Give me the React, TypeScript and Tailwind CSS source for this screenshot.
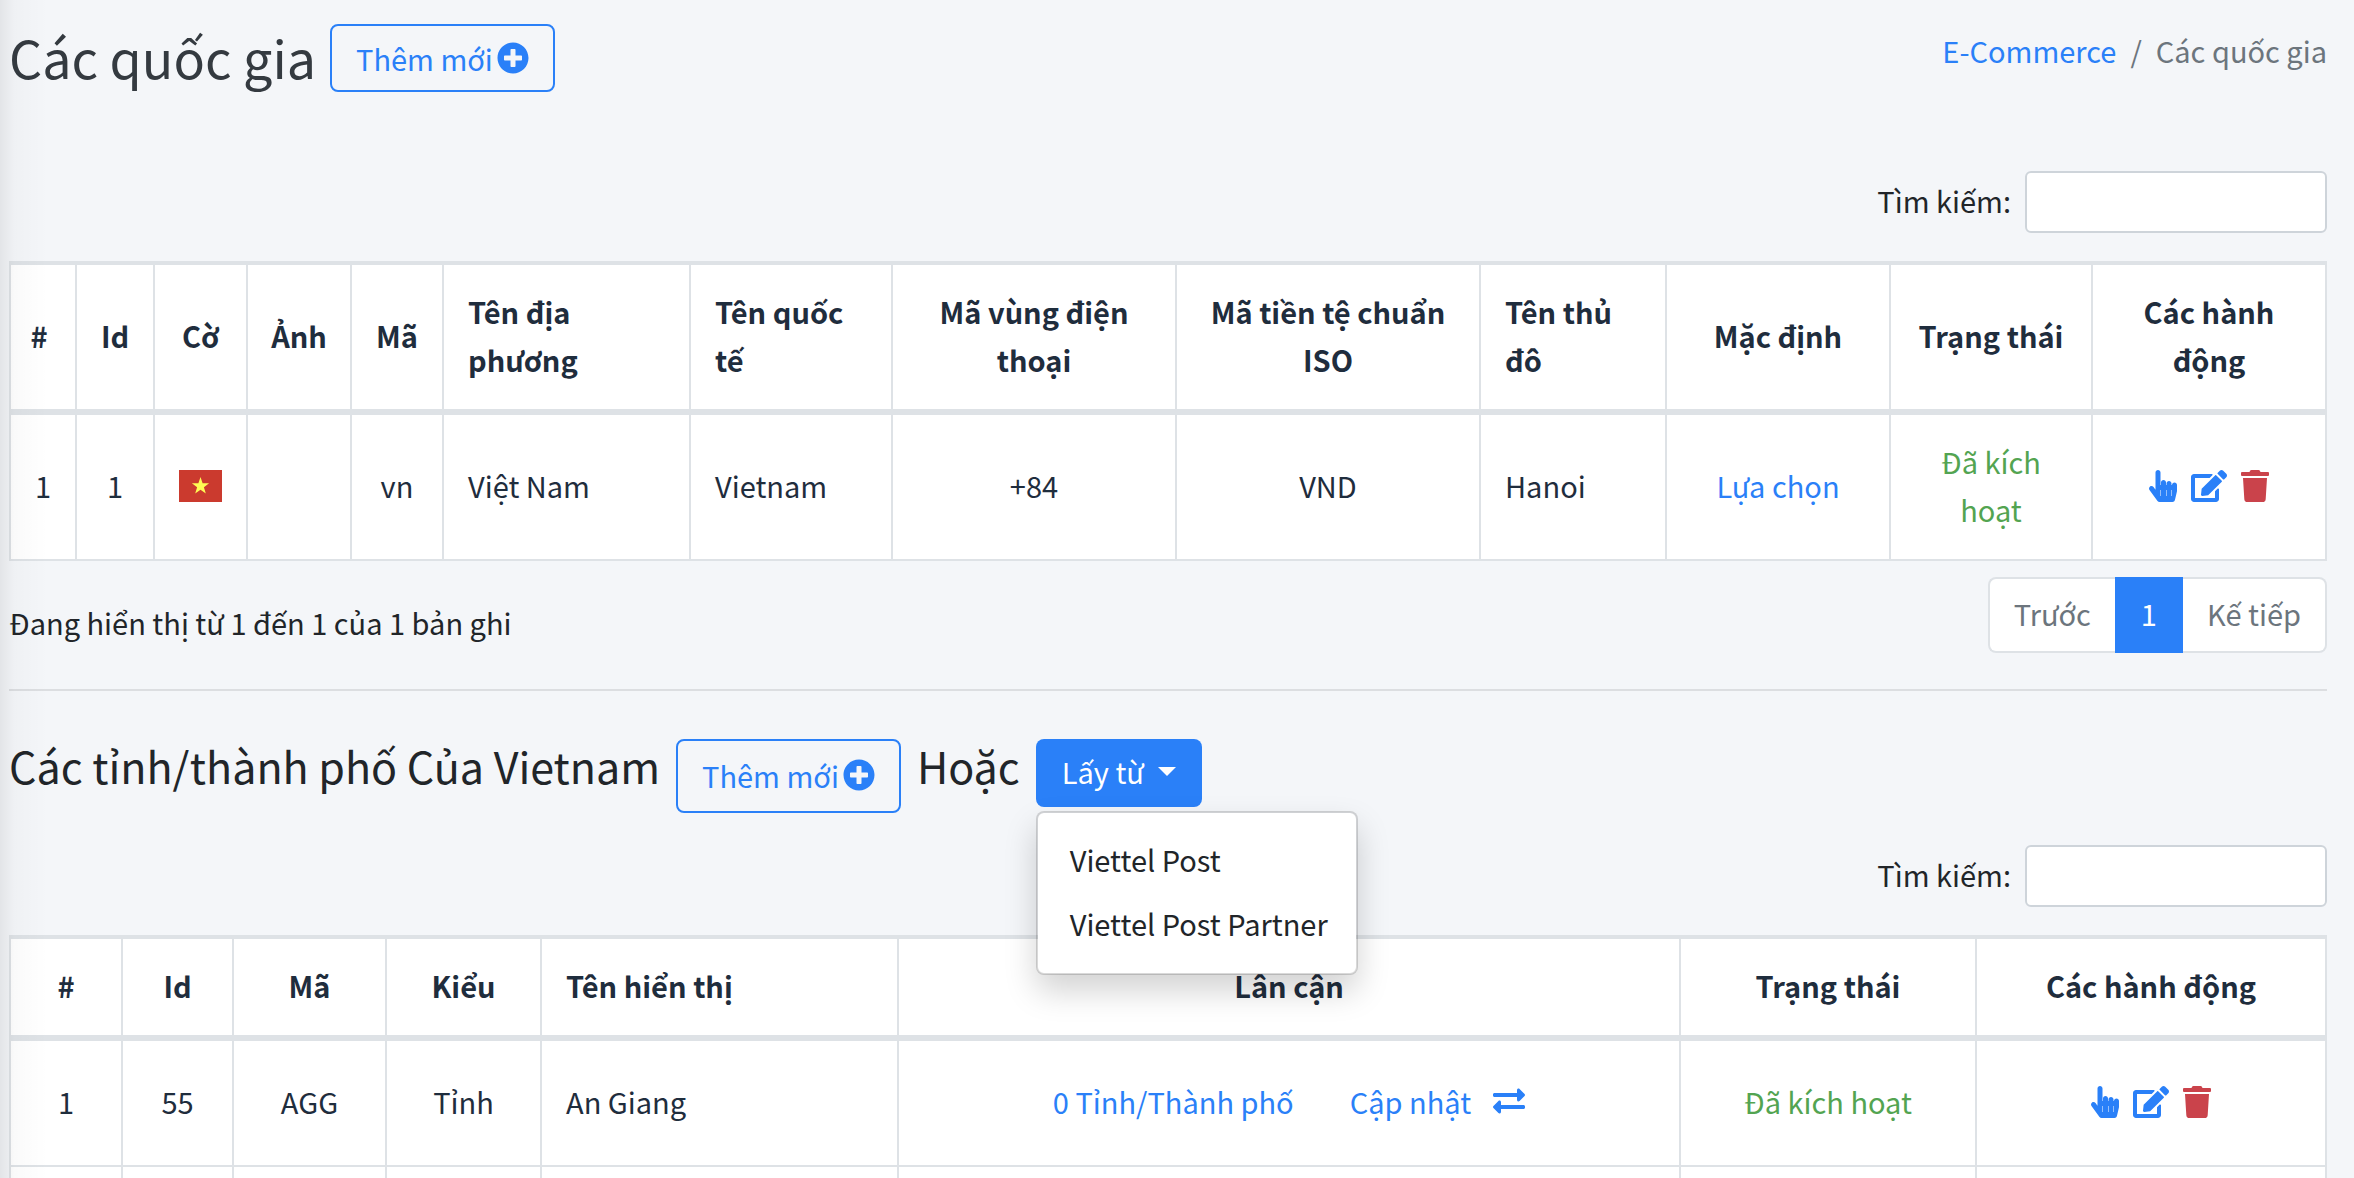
import { FaEdit, FaExchangeAlt, FaHandPointer, FaPlusCircle, FaTrash } from "react-icons/fa";

const countryColumns = [
    { title: "#", width: "w-[66px]", align: "pr-2 text-center" },
    { title: "Id", width: "w-[78px]", align: "text-center" },
    { title: "Cờ", width: "w-[93px]", align: "text-center" },
    { title: "Ảnh", width: "w-[104px]", align: "text-center" },
    { title: "Mã", width: "w-[92px]", align: "text-center" },
    { title: "Tên địa phương", width: "w-[247px]", align: "px-6 text-left" },
    { title: "Tên quốc tế", width: "w-[202px]", align: "px-6 text-left" },
    { title: "Mã vùng điện thoại", width: "w-[284px]", align: "px-6 text-center" },
    { title: "Mã tiền tệ chuẩn ISO", width: "w-[304px]", align: "px-6 text-center" },
    { title: "Tên thủ đô", width: "w-[186px]", align: "px-6 text-left" },
    { title: "Mặc định", width: "w-[224px]", align: "px-6 text-center" },
    { title: "Trạng thái", width: "w-[202px]", align: "px-6 text-center" },
    { title: "Các hành động", width: "w-[232px]", align: "px-6 text-center" },
]

const provinceColumns = [
    { title: "#", width: "w-[112px]", align: "text-center" },
    { title: "Id", width: "w-[111px]", align: "text-center" },
    { title: "Mã", width: "w-[153px]", align: "text-center" },
    { title: "Kiểu", width: "w-[155px]", align: "text-center" },
    { title: "Tên hiển thị", width: "w-[357px]", align: "px-6 text-left" },
    { title: "Lân cận", width: "w-[782px]", align: "text-center" },
    { title: "Trạng thái", width: "w-[296px]", align: "text-center" },
    { title: "Các hành động", width: "w-[348px]", align: "text-center" },
]

function AddButton({ className }: any) {
    return (
        <button type="button" className={`flex items-center gap-1 rounded-lg border-2 border-[#2a80f8] px-6 text-[29px] leading-[48px] text-[#2a80f8] ${className}`}>
            Thêm mới <FaPlusCircle className="size-8" />
        </button>
    )
}

function Search({ id }: any) {
    return (
        <div className="flex items-center justify-end gap-[14px]">
            <label htmlFor={id} className="pb-1">Tìm kiếm:</label>
            <input id={id} type="search" className="h-[62px] w-[302px] rounded-md border-2 border-[#ced4da] bg-white px-4" />
        </div>
    )
}

function Actions() {
    return (
        <div className="flex items-center justify-center gap-[14px] pt-0.5 text-[#2a80f8]">
            <a href="#" aria-label="Chọn"><FaHandPointer className="h-8 w-7" /></a>
            <a href="#" aria-label="Sửa"><FaEdit className="h-8 w-9" /></a>
            <a href="#" aria-label="Xóa" className="text-[#ca434b]"><FaTrash className="h-8 w-7" /></a>
        </div>
    )
}

function Flag() {
    return (
        <div className="flex justify-center pt-0.5">
            <svg viewBox="0 0 43 32" className="h-8 w-[43px]">
                <rect width="43" height="32" fill="#cb3a2e" />
                <path d="M21.5 7l2.1 6.2h6.5l-5.2 4 1.9 6.4-5.3-3.9-5.3 3.9 1.9-6.4-5.2-4h6.5z" fill="#fffb54" />
            </svg>
        </div>
    )
}

function DataTable({ columns, children }: any) {
    return (
        <table className="w-full table-fixed border-separate border-spacing-0 border-2 border-[#dee2e6] bg-white text-[#1f2d3d]">
            <thead>
                <tr>
                    {columns.map((col: any, i: number) => (
                        <th key={i} className={`${col.width} ${col.align} border-t-2 border-r-2 border-b-4 border-[#dee2e6] pt-[22px] pb-[26px] font-bold last:border-r-0`}>
                            {col.title}
                        </th>
                    ))}
                </tr>
            </thead>
            <tbody>{children}</tbody>
        </table>
    )
}

function Cell({ className = "text-center", children }: any) {
    return (
        <td className={`border-t-2 border-r-2 border-[#dee2e6] pt-[22px] pb-[26px] last:border-r-0 ${className}`}>{children}</td>
    )
}

export default function App() {
    return (
        <div className="relative h-screen overflow-hidden bg-[#f4f6f9] pr-[27px] pl-[9px] font-['Noto_Sans_CJK_SC',sans-serif] text-[29px] leading-[48px] text-[#212529]">
            <header className="flex items-start justify-between pt-6">
                <div className="flex items-start gap-[14px]">
                    <h1 className="text-[52px] leading-[66px] text-[#343a40]">Các quốc gia</h1>
                    <AddButton className="py-2" />
                </div>
                <nav className="flex gap-[14px] pt-0.5 text-[#6c757d]">
                    <a href="#" className="text-[#2a80f8]">E-Commerce</a>
                    <span>/</span>
                    <span>Các quốc gia</span>
                </nav>
            </header>

            <section className="mt-[79px]">
                <Search id="search-countries" />
                <div className="mt-7">
                    <DataTable columns={countryColumns}>
                        <tr>
                            <Cell>1</Cell>
                            <Cell>1</Cell>
                            <Cell><Flag /></Cell>
                            <Cell />
                            <Cell>vn</Cell>
                            <Cell className="px-6">Việt Nam</Cell>
                            <Cell className="px-6">Vietnam</Cell>
                            <Cell>+84</Cell>
                            <Cell>VND</Cell>
                            <Cell className="px-6">Hanoi</Cell>
                            <Cell><a href="#" className="text-[#2a80f8]">Lựa chọn</a></Cell>
                            <Cell className="px-6 text-center text-[#53a451]">Đã kích hoạt</Cell>
                            <Cell><Actions /></Cell>
                        </tr>
                    </DataTable>
                </div>
                <div className="mt-4 flex items-start justify-between">
                    <p className="pt-[21px]">Đang hiển thị từ 1 đến 1 của 1 bản ghi</p>
                    <div className="flex text-[#6c757d]">
                        <button type="button" className="rounded-l-lg border-2 border-r-0 border-[#dee2e6] bg-white px-6 pt-[10px] pb-[14px]">Trước</button>
                        <button type="button" className="border-2 border-[#2a80f8] bg-[#2a80f8] px-6 pt-[10px] pb-[14px] text-white">1</button>
                        <button type="button" className="rounded-r-lg border-2 border-l-0 border-[#dee2e6] bg-white px-6 pt-[10px] pb-[14px]">Kế tiếp</button>
                    </div>
                </div>
            </section>

            <hr className="mt-9 border-t-2 border-[#dcdee1]" />

            <section className="mt-12">
                <div className="flex items-start gap-4">
                    <h2 className="text-[43px] leading-[52px]">Các tỉnh/thành phố Của Vietnam</h2>
                    <AddButton className="pt-[10px] pb-3" />
                    <span className="text-[43px] leading-[52px]">Hoặc</span>
                    <div className="relative">
                        <button type="button" className="flex items-center gap-[14px] rounded-lg bg-[#2a80f8] px-[26px] pt-2 pb-3 text-white">
                            Lấy từ
                            <svg viewBox="0 0 18 9" className="h-[9px] w-[18px]" fill="currentColor"><path d="M0 0h18L9 9z" /></svg>
                        </button>
                        <div className="absolute top-full left-0 z-10 mt-1 flex flex-col rounded-lg border-2 border-black/15 bg-white bg-clip-padding py-4 whitespace-nowrap shadow-[0_16px_32px_rgba(0,0,0,0.175)]">
                            <a href="#" className="pt-1.5 pr-7 pb-[10px] pl-8">Viettel Post</a>
                            <a href="#" className="pt-1.5 pr-7 pb-[10px] pl-8">Viettel Post Partner</a>
                        </div>
                    </div>
                </div>
                <div className="mt-8">
                    <Search id="search-provinces" />
                </div>
                <div className="mt-7">
                    <DataTable columns={provinceColumns}>
                        <tr className="h-[126px]">
                            <Cell>1</Cell>
                            <Cell>55</Cell>
                            <Cell>AGG</Cell>
                            <Cell>Tỉnh</Cell>
                            <Cell className="px-6">An Giang</Cell>
                            <Cell>
                                <div className="flex items-center justify-center text-[#2a80f8]">
                                    <a href="#">0 Tỉnh/Thành phố</a>
                                    <a href="#" className="ml-14 flex items-center gap-[22px]">
                                        Cập nhật <FaExchangeAlt className="size-8" />
                                    </a>
                                </div>
                            </Cell>
                            <Cell className="text-center text-[#53a451]">Đã kích hoạt</Cell>
                            <Cell><Actions /></Cell>
                        </tr>
                        <tr className="h-[126px]">
                            {provinceColumns.map((col, i) => (
                                <Cell key={i} />
                            ))}
                        </tr>
                    </DataTable>
                </div>
            </section>

            {/* shadow cast by the sidebar */}
            <div className="pointer-events-none absolute inset-y-0 left-0 w-12 bg-linear-to-r from-black/7 via-black/2 via-30% to-transparent" />
        </div>
    )
}
